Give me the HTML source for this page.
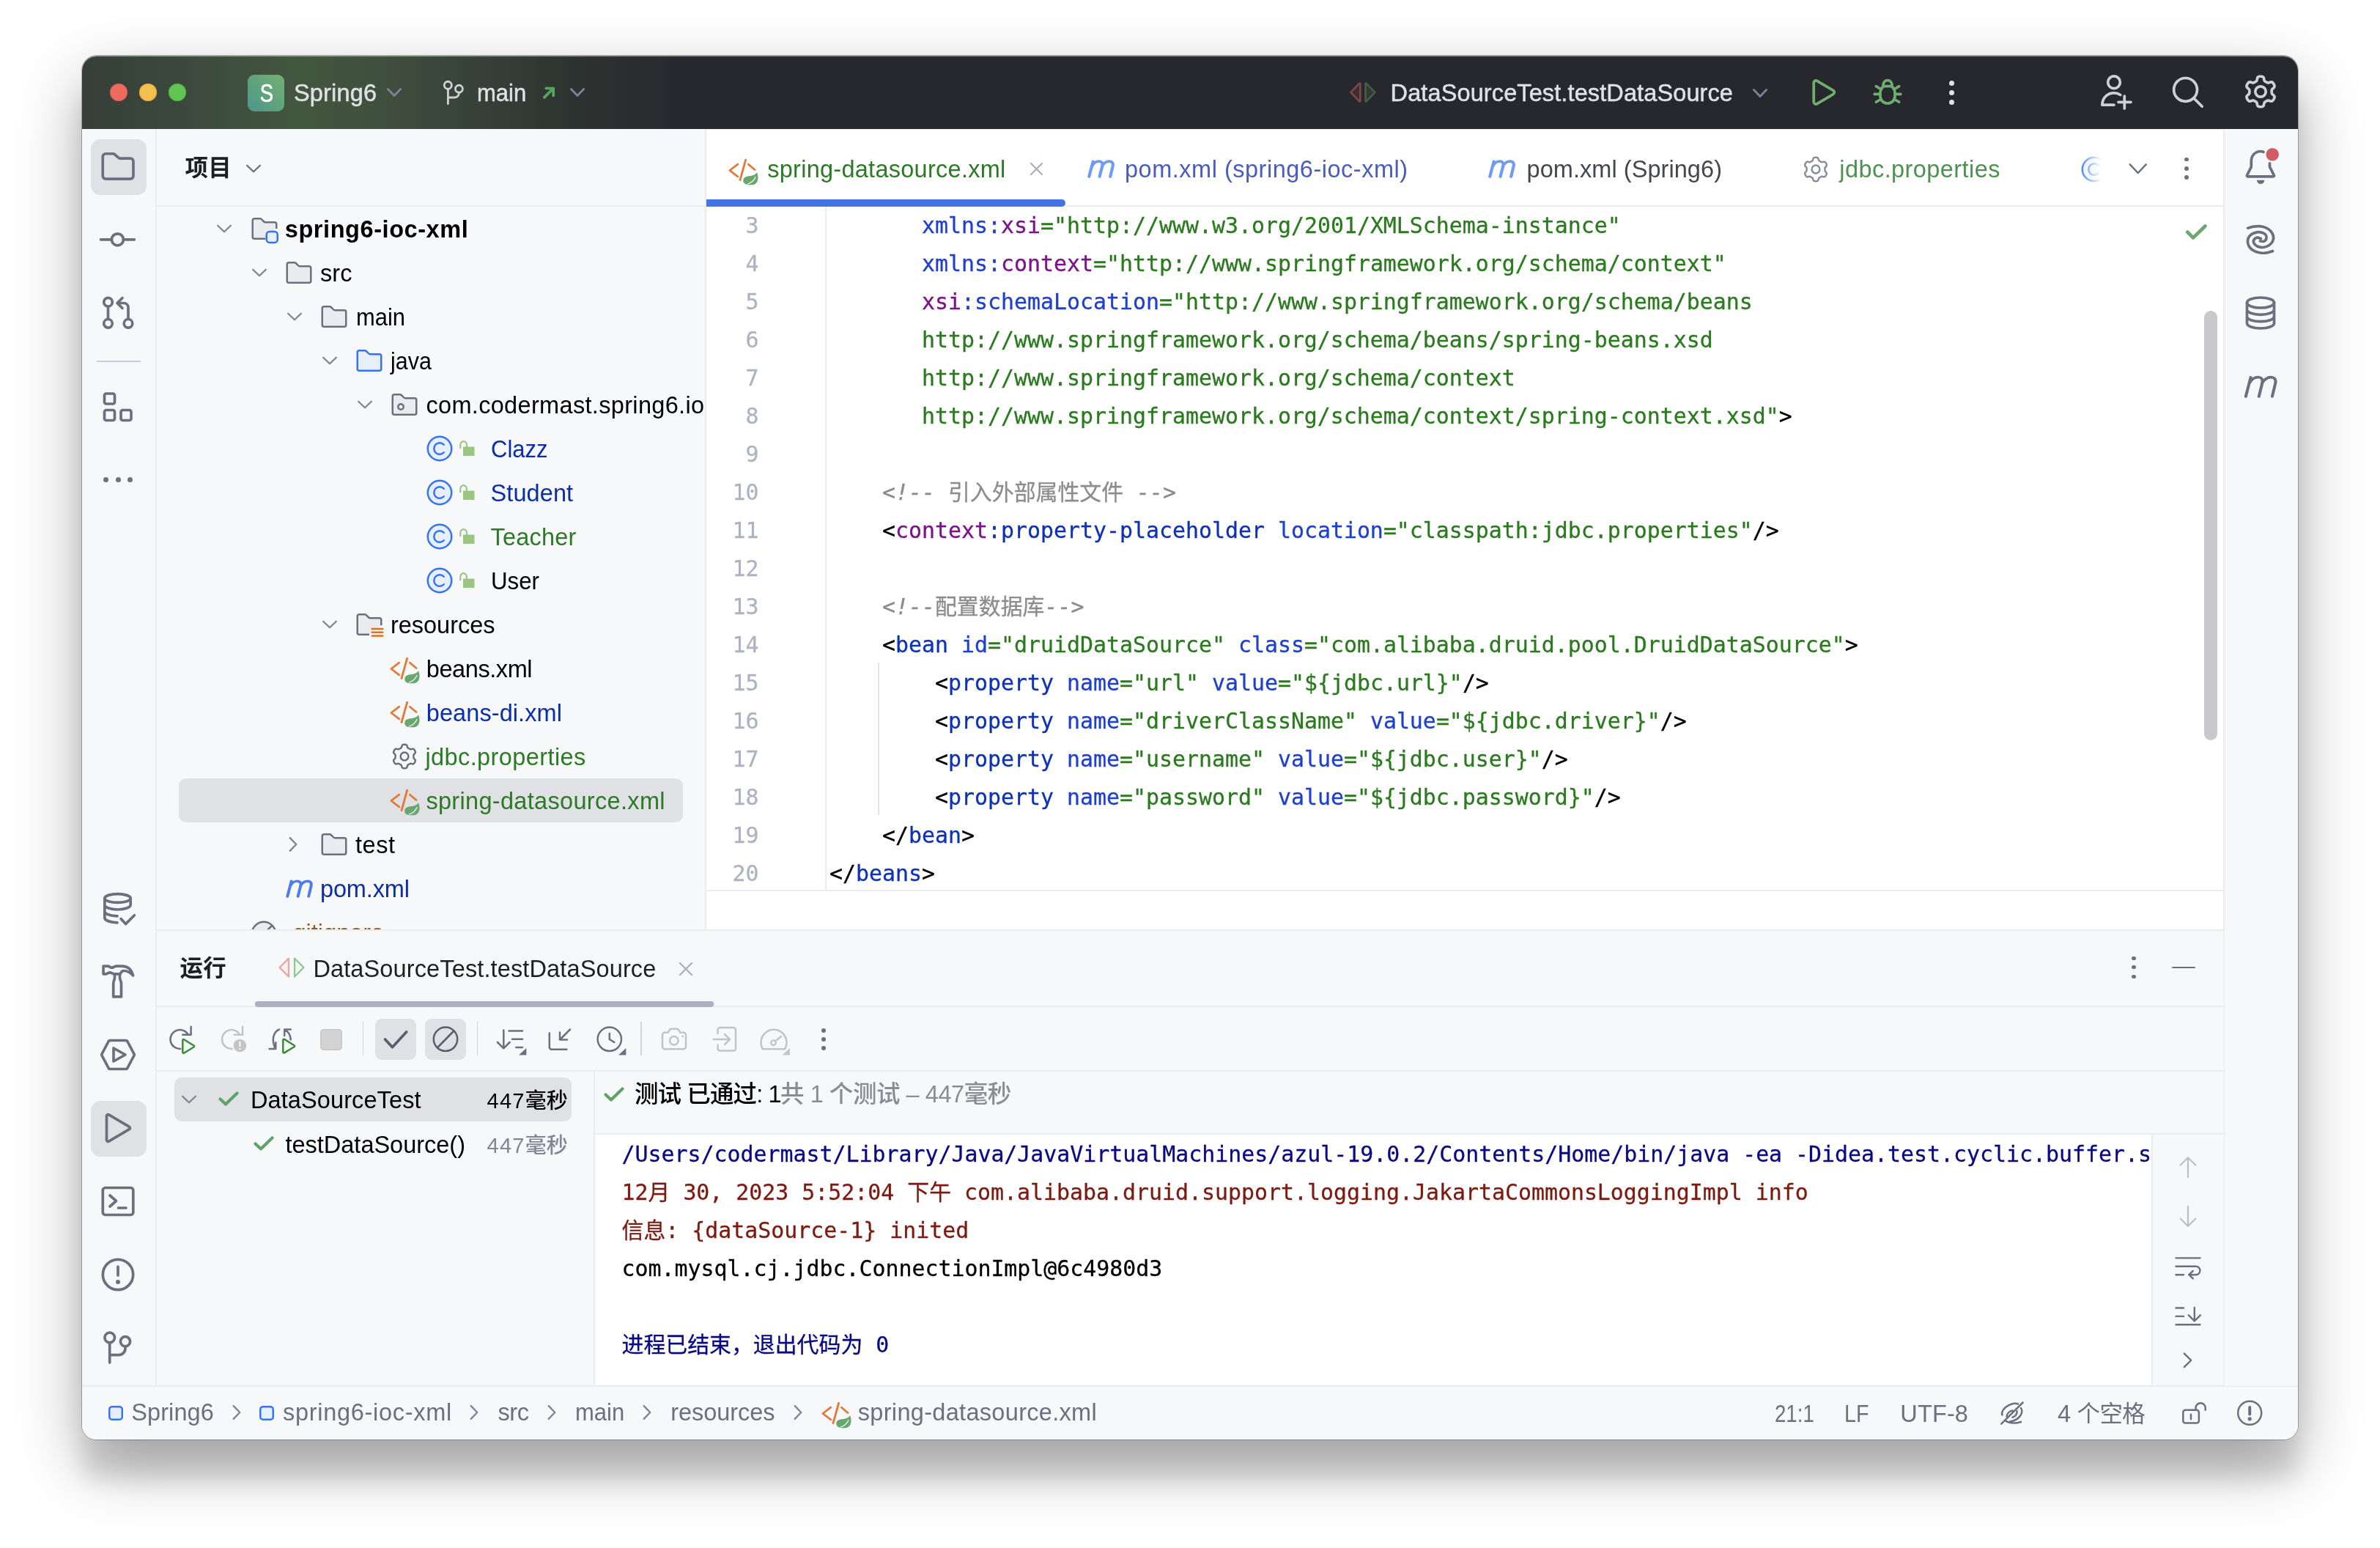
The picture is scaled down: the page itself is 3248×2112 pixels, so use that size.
<!DOCTYPE html>
<html lang="zh-CN"><head><meta charset="utf-8"><title>Spring6 – spring-datasource.xml</title>
<style>

*{box-sizing:border-box;margin:0;padding:0}
html,body{width:3248px;height:2112px;overflow:hidden;background:#fff}
body{position:relative;font-family:"Liberation Sans","Noto Sans CJK SC",sans-serif;font-size:32.5px;font-weight:500;color:#000;-webkit-font-smoothing:antialiased}
#shadow{position:absolute;left:112px;top:76px;width:3024px;height:1888px;border-radius:20px;
 box-shadow:0 0 0 1px rgba(0,0,0,.26),0 34px 90px rgba(0,0,0,.315),0 54px 30px rgba(0,0,0,.115)}
#win{position:absolute;left:112px;top:76px;width:3024px;height:1888px;border-radius:20px;overflow:hidden;background:#F7F8FA}
#rim{position:absolute;left:112px;top:76px;width:3024px;height:1888px;border-radius:20px;box-shadow:inset 0 1.2px 0 0 rgba(255,255,255,.38);pointer-events:none}
#in{position:absolute;left:-112px;top:-76px;width:3248px;height:2112px;will-change:transform}
.a{position:absolute}
.t{position:absolute;white-space:pre;line-height:40px;height:40px}
.mono{font-family:"DejaVu Sans Mono","Liberation Mono","Noto Sans CJK SC",monospace;font-size:29.9px;font-weight:400;-webkit-text-stroke:.3px}
.mono i{font-style:italic}
svg{position:absolute;overflow:visible}
.hl{position:absolute;height:2px;background:#EBECF0}
.vl{position:absolute;width:2px;background:#EBECF0}

</style></head>
<body>
<div id="shadow"></div>
<div id="win"><div id="in">
<!-- title bar -->
<div class="a" style="left:112px;top:76px;width:3024px;height:100px;background:#27282E"></div>
<div class="a" style="left:112px;top:76px;width:820px;height:100px;background:linear-gradient(90deg,#353F38 0%,#39463B 12%,#43563F 36%,#3F4F3D 50%,#353F38 68%,#2C312F 84%,#27282E 100%)"></div>
<div class="a" style="left:150px;top:114px;width:24px;height:24px;border-radius:12px;background:#EC6A5E;box-shadow:inset 0 0 0 1px #D5594D"></div>
<div class="a" style="left:190px;top:114px;width:24px;height:24px;border-radius:12px;background:#F4BF4F;box-shadow:inset 0 0 0 1px #D9A63B"></div>
<div class="a" style="left:230px;top:114px;width:24px;height:24px;border-radius:12px;background:#61C554;box-shadow:inset 0 0 0 1px #4FAE42"></div>
<div class="a" style="left:338px;top:102px;width:50px;height:50px;border-radius:9px;background:linear-gradient(45deg,#4C958D 0%,#61A37E 50%,#72B072 100%)"></div>
<div class="t" style="left:338.5px;top:106.6px;width:50px;text-align:center;font-size:34.3px;color:#fff;-webkit-text-stroke:.7px #fff;transform:scaleX(.80);transform-origin:50% 50%">S</div>
<div class="t" style="left:401.0px;top:106.5px;color:#DFE1E5;letter-spacing:0.17px;-webkit-text-stroke:.5px #DFE1E5;">Spring6</div>
<svg class="a" style="left:0;top:0" width="10" height="10" viewBox="0 0 10 10" fill="none"><path d="M529.4 121.55L538 130.45L546.6 121.55" stroke="#7D8296" stroke-width="2.8" stroke-linecap="round" stroke-linejoin="round"/></svg>
<svg class="a" style="left:0;top:0" width="10" height="10" viewBox="0 0 10 10" fill="none"><circle cx="611.3" cy="116.3" r="5.05" stroke="#CED0D6" stroke-width="2.8" stroke-linecap="round" stroke-linejoin="round"/><circle cx="626.4" cy="121.2" r="4.95" stroke="#CED0D6" stroke-width="2.8" stroke-linecap="round" stroke-linejoin="round"/><path d="M611.4 121.5V141.7M611.4 133h9a6 6 0 0 0 6-6v-0.7" stroke="#CED0D6" stroke-width="2.8" stroke-linecap="round" stroke-linejoin="round"/></svg>
<div class="t" style="left:651.4px;top:106.5px;color:#DFE1E5;transform:scaleX(0.954);transform-origin:0 50%;-webkit-text-stroke:.5px #DFE1E5;">main</div>
<svg class="a" style="left:0;top:0" width="10" height="10" viewBox="0 0 10 10" fill="none"><path d="M742.8 132.9L755.2 120.5M745.3 120.5h9.9v9.9" stroke="#57A55F" stroke-width="3.7" stroke-linecap="round" stroke-linejoin="round"/></svg>
<svg class="a" style="left:0;top:0" width="10" height="10" viewBox="0 0 10 10" fill="none"><path d="M779.4 121.55L788 130.45L796.6 121.55" stroke="#7D8296" stroke-width="2.8" stroke-linecap="round" stroke-linejoin="round"/></svg>
<svg class="a" style="left:0;top:0" width="10" height="10" viewBox="0 0 10 10" fill="none"><path d="M1856.3 114.5V137.5a.8.8 0 0 1-1.3.6L1844 126.6a.8.8 0 0 1 0-1.2L1855 113.9a.8.8 0 0 1 1.3.6z" fill="#3C2D30" stroke="#7D4648" stroke-width="2.8" stroke-linejoin="round"/><path d="M1863.5 114.5V137.5a.8.8 0 0 0 1.3.6L1875.800 126.6a.8.8 0 0 0 0-1.2L1864.800 113.9a.8.8 0 0 0-1.3.6z" fill="#303A34" stroke="#445C46" stroke-width="2.8" stroke-linejoin="round"/></svg>
<div class="t" style="left:1897.6px;top:106.5px;color:#DFE1E5;letter-spacing:0.11px;-webkit-text-stroke:.5px #DFE1E5;">DataSourceTest.testDataSource</div>
<svg class="a" style="left:0;top:0" width="10" height="10" viewBox="0 0 10 10" fill="none"><path d="M2393.4 122.55L2402 131.45L2410.6 122.55" stroke="#7D8296" stroke-width="2.8" stroke-linecap="round" stroke-linejoin="round"/></svg>
<svg class="a" style="left:0;top:0" width="10" height="10" viewBox="0 0 10 10" fill="none"><path d="M2475.2 113V139a3 3 0 0 0 4.5 2.6L2501.8 128.6a3 3 0 0 0 0-5.2L2479.7 110.4a3 3 0 0 0-4.5 2.6z" stroke="#6FAE70" stroke-width="3.7" stroke-linecap="round" stroke-linejoin="round"/></svg>
<svg class="a" style="left:0;top:0" width="10" height="10" viewBox="0 0 10 10" fill="none"><path d="M2571 117.7h10c3 1.8 5 5.3 5 9.3v4a10 10 0 0 1-20 0v-4c0-4 2-7.5 5-9.3z" stroke="#6FAE70" stroke-width="3.7" stroke-linecap="round" stroke-linejoin="round"/><path d="M2570 117.5v-1.8a6 6 0 0 1 12 0v1.8" stroke="#6FAE70" stroke-width="3.7" stroke-linecap="round" stroke-linejoin="round"/><path d="M2565.8 121l-5.5-3.3M2586.2 121l5.5-3.3M2565.5 128.4h-7.3M2586.5 128.4h7.3M2566 136l-5.7 3.2M2586 136l5.7 3.2" stroke="#6FAE70" stroke-width="3.7" stroke-linecap="round" stroke-linejoin="round"/></svg>
<div class="a" style="left:2660.3px;top:109.5px;width:7px;height:7px;border-radius:4px;background:#DFE1E5"></div>
<div class="a" style="left:2660.3px;top:122.5px;width:7px;height:7px;border-radius:4px;background:#DFE1E5"></div>
<div class="a" style="left:2660.3px;top:136px;width:7px;height:7px;border-radius:4px;background:#DFE1E5"></div>
<svg class="a" style="left:0;top:0" width="10" height="10" viewBox="0 0 10 10" fill="none"><circle cx="2885" cy="112.3" r="8.35" stroke="#CED0D6" stroke-width="3.7" stroke-linecap="round" stroke-linejoin="round"/><path d="M2884.9 143.2H2868.9c0-9.5 6.8-16.4 16.3-16.4 3.100 0 6 .8 8.5 2.6" stroke="#CED0D6" stroke-width="3.7" stroke-linecap="round" stroke-linejoin="round"/><path d="M2899.3 131v17M2891 139.3h17" stroke="#CED0D6" stroke-width="3.7" stroke-linecap="round" stroke-linejoin="round"/></svg>
<svg class="a" style="left:0;top:0" width="10" height="10" viewBox="0 0 10 10" fill="none"><circle cx="2982.55" cy="122.4" r="15.9" stroke="#CED0D6" stroke-width="3.7" stroke-linecap="round" stroke-linejoin="round"/><path d="M2994.2 134.2l11 11" stroke="#CED0D6" stroke-width="3.7" stroke-linecap="round" stroke-linejoin="round"/></svg>
<svg class="a" style="left:3060.0px;top:100.3px" width="50" height="50" viewBox="0 0 50 50" fill="none" ><path d="M25.00 4.25L25.72 4.27L26.45 4.33L27.16 4.45L27.86 4.67L28.52 5.06L29.09 5.77L29.50 6.94L29.78 8.34L30.03 9.50L30.37 10.25L30.77 10.71L31.22 11.03L31.68 11.31L32.14 11.57L32.60 11.84L33.06 12.10L33.52 12.37L33.99 12.63L34.49 12.85L35.09 12.97L35.90 12.89L37.04 12.53L38.39 12.07L39.61 11.85L40.51 11.98L41.18 12.36L41.72 12.86L42.18 13.41L42.59 14.01L42.97 14.62L43.32 15.26L43.62 15.92L43.88 16.60L44.04 17.31L44.03 18.07L43.69 18.93L42.90 19.87L41.82 20.81L40.94 21.61L40.46 22.27L40.27 22.85L40.20 23.40L40.19 23.94L40.20 24.47L40.20 25.00L40.20 25.53L40.19 26.06L40.20 26.60L40.27 27.15L40.46 27.73L40.94 28.39L41.82 29.19L42.90 30.13L43.69 31.07L44.03 31.93L44.04 32.69L43.88 33.40L43.62 34.08L43.32 34.74L42.97 35.37L42.59 35.99L42.18 36.59L41.72 37.14L41.18 37.64L40.51 38.02L39.61 38.15L38.39 37.93L37.04 37.47L35.90 37.11L35.09 37.03L34.49 37.15L33.99 37.37L33.52 37.63L33.06 37.90L32.60 38.16L32.14 38.43L31.68 38.69L31.22 38.97L30.77 39.29L30.37 39.75L30.03 40.50L29.78 41.66L29.50 43.06L29.09 44.23L28.52 44.94L27.86 45.33L27.16 45.55L26.45 45.67L25.72 45.73L25.00 45.75L24.28 45.73L23.55 45.67L22.84 45.55L22.14 45.33L21.48 44.94L20.91 44.23L20.50 43.06L20.22 41.66L19.97 40.50L19.63 39.75L19.23 39.29L18.78 38.97L18.32 38.69L17.86 38.43L17.40 38.16L16.94 37.90L16.48 37.63L16.01 37.37L15.51 37.15L14.91 37.03L14.10 37.11L12.96 37.47L11.61 37.93L10.39 38.15L9.49 38.02L8.82 37.64L8.28 37.14L7.82 36.59L7.41 35.99L7.03 35.38L6.68 34.74L6.38 34.08L6.12 33.40L5.96 32.69L5.97 31.93L6.31 31.07L7.10 30.13L8.18 29.19L9.06 28.39L9.54 27.73L9.73 27.15L9.80 26.60L9.81 26.06L9.80 25.53L9.80 25.00L9.80 24.47L9.81 23.94L9.80 23.40L9.73 22.85L9.54 22.27L9.06 21.61L8.18 20.81L7.10 19.87L6.31 18.93L5.97 18.07L5.96 17.31L6.12 16.60L6.38 15.92L6.68 15.26L7.03 14.62L7.41 14.01L7.82 13.41L8.28 12.86L8.82 12.36L9.49 11.98L10.39 11.85L11.61 12.07L12.96 12.53L14.10 12.89L14.91 12.97L15.51 12.85L16.01 12.63L16.48 12.37L16.94 12.10L17.40 11.84L17.86 11.57L18.32 11.31L18.78 11.03L19.23 10.71L19.63 10.25L19.97 9.50L20.22 8.34L20.50 6.94L20.91 5.77L21.48 5.06L22.14 4.67L22.84 4.45L23.55 4.33L24.28 4.27L25.00 4.25Z" stroke="#CED0D6" stroke-width="3.7" stroke-linejoin="round"/><circle cx="25" cy="25" r="7.2" stroke="#CED0D6" stroke-width="3.7"/></svg>
<!-- left stripe -->
<div class="a" style="left:112px;top:176px;width:101px;height:1715px;background:#F7F8FA;"></div>
<div class="vl" style="left:212px;top:176px;height:1715px"></div>
<div class="a" style="left:124px;top:190px;width:76px;height:76px;background:#DFE1E5;border-radius:13px;"></div>
<svg class="a" style="left:136.0px;top:202.0px" width="50" height="50" viewBox="0 0 50 50" fill="none" ><path d="M4.25 11.75V38.05a4 4 0 0 0 4 4H41.95a4 4 0 0 0 4-4V18.2a4 4 0 0 0-4-4H27.6a2 2 0 0 1-1.3-.5L20 8.25a2 2 0 0 0-1.3-.5H8.25a4 4 0 0 0-4 4z" stroke="#6C707E" stroke-width="3.7" stroke-linecap="round" stroke-linejoin="round"/></svg>
<svg class="a" style="left:136.0px;top:302.0px" width="50" height="50" viewBox="0 0 50 50" fill="none" ><circle cx="24.4" cy="24.8" r="8" stroke="#6C707E" stroke-width="3.7"/><path d="M1.5 24.8h14.5M32.8 24.8h14.5" stroke="#6C707E" stroke-width="3.7" stroke-linecap="round" stroke-linejoin="round"/></svg>
<svg class="a" style="left:136.0px;top:402.0px" width="50" height="50" viewBox="0 0 50 50" fill="none" ><circle cx="11.5" cy="10.2" r="5.8" stroke="#6C707E" stroke-width="3.7"/><circle cx="11.5" cy="39.3" r="5.8" stroke="#6C707E" stroke-width="3.7"/><circle cx="39" cy="39.3" r="5.8" stroke="#6C707E" stroke-width="3.7"/><path d="M11.5 16.5v16.5M39 33V17.5a6 6 0 0 0-6-6h-7M31 4.5l-7 7 7 7" stroke="#6C707E" stroke-width="3.7" stroke-linecap="round" stroke-linejoin="round"/></svg>
<div class="a" style="left:132px;top:492px;width:60px;height:2px;background:#C9CCD6;"></div>
<svg class="a" style="left:136.0px;top:530.0px" width="50" height="50" viewBox="0 0 50 50" fill="none" ><rect x="6.5" y="7" width="14" height="14" rx="2.5" stroke="#6C707E" stroke-width="3.7"/><rect x="6.5" y="29.5" width="14" height="14" rx="2.5" stroke="#6C707E" stroke-width="3.7"/><rect x="29" y="29.5" width="14" height="14" rx="2.5" stroke="#6C707E" stroke-width="3.7"/></svg>
<div class="a" style="left:141px;top:651px;width:7px;height:7px;border-radius:4px;background:#6C707E"></div>
<div class="a" style="left:157.5px;top:651px;width:7px;height:7px;border-radius:4px;background:#6C707E"></div>
<div class="a" style="left:174px;top:651px;width:7px;height:7px;border-radius:4px;background:#6C707E"></div>
<svg class="a" style="left:0;top:0" width="10" height="10" viewBox="0 0 10 10" fill="none"><ellipse cx="160.5" cy="1225.55" rx="17.65" ry="5.9" stroke="#6C707E" stroke-width="3.7"/><path d="M142.85 1225.5V1252.2c0 3.3 7 6 17.2 6.6M178.15 1225.5V1234.6M142.85 1234.6c0 3.5 7.9 6.4 17.650 6.4s17.650-2.9 17.650-6.4M142.85 1243.4c0 3.3 7 6 17.2 6.5" stroke="#6C707E" stroke-width="3.7" stroke-linecap="round" stroke-linejoin="round"/><path d="M165 1253.6l6.5 7 11.9-11.9" stroke="#6C707E" stroke-width="3.7" stroke-linecap="round" stroke-linejoin="round"/></svg>
<svg class="a" style="left:0;top:0" width="10" height="10" viewBox="0 0 10 10" fill="none"><path d="M141.05 1318.2H147.2c1.5 0 2 .5 3 1.2 1.5 1 3.5 1 5 0 1-.7 1.8-1.2 3.3-1.2H166.5c8 0 13 5 15.1 12.8-4-4.5-8.5-6.5-12.5-6.5-2.5 0-4 2-5 4.3H155.8c-1.5 0-2.3-.5-3.3-1.2-1.5-1-3.5-1-5 0-1 .7-1.5 1.2-3 1.2H141.05z" stroke="#6C707E" stroke-width="3.7" stroke-linecap="round" stroke-linejoin="round"/><path d="M156.5 1329.5V1334c0 3-1.8 4-1.8 8V1359.9H165.5V1342c0-4-2-5-2-8V1329.5" stroke="#6C707E" stroke-width="3.7" stroke-linecap="round" stroke-linejoin="round"/></svg>
<svg class="a" style="left:136.0px;top:1414.0px" width="50" height="50" viewBox="0 0 50 50" fill="none" ><path d="M14 5.5h22a2 2 0 0 1 1.7 1l9.3 17.5a2 2 0 0 1 0 2L37.7 43.5a2 2 0 0 1-1.7 1H14a2 2 0 0 1-1.7-1L3 26a2 2 0 0 1 0-2L12.3 6.5a2 2 0 0 1 1.7-1z" stroke="#6C707E" stroke-width="3.7" stroke-linecap="round" stroke-linejoin="round"/><path d="M19 16v18l16-9z" stroke="#6C707E" stroke-width="3.7" stroke-linecap="round" stroke-linejoin="round"/></svg>
<div class="a" style="left:124px;top:1502px;width:76px;height:76px;background:#DFE1E5;border-radius:13px;"></div>
<svg class="a" style="left:136.0px;top:1514.0px" width="50" height="50" viewBox="0 0 50 50" fill="none" ><path d="M9.5 8.5v33a2 2 0 0 0 3 1.7l28-16.5a2 2 0 0 0 0-3.4l-28-16.5a2 2 0 0 0-3 1.7z" stroke="#6C707E" stroke-width="3.7" stroke-linecap="round" stroke-linejoin="round"/></svg>
<svg class="a" style="left:136.0px;top:1614.0px" width="50" height="50" viewBox="0 0 50 50" fill="none" ><rect x="4.3" y="6.5" width="41.5" height="37" rx="3.5" stroke="#6C707E" stroke-width="3.7"/><path d="M14 17l8.5 7.5L14 32M25.5 34h10.5" stroke="#6C707E" stroke-width="3.7" stroke-linecap="round" stroke-linejoin="round"/></svg>
<svg class="a" style="left:136.0px;top:1714.0px" width="50" height="50" viewBox="0 0 50 50" fill="none" ><circle cx="25" cy="25" r="20.7" stroke="#6C707E" stroke-width="3.7"/><path d="M25 14v12" stroke="#6C707E" stroke-width="3.7" stroke-linecap="round" stroke-linejoin="round"/><circle cx="25" cy="35" r="3" fill="#6C707E"/></svg>
<svg class="a" style="left:136.0px;top:1813.0px" width="50" height="50" viewBox="0 0 50 50" fill="none" ><circle cx="13.7" cy="12" r="6.8" stroke="#6C707E" stroke-width="3.7"/><circle cx="35" cy="17.3" r="6.6" stroke="#6C707E" stroke-width="3.7"/><path d="M13.7 19v27M13.7 35.7h12.3a9 9 0 0 0 9-9v-2.5" stroke="#6C707E" stroke-width="3.7" stroke-linecap="round" stroke-linejoin="round"/></svg>
<!-- project tool window -->
<div class="a" style="left:214px;top:176px;width:749px;height:1092px;background:#F7F8FA;overflow:hidden"><div class="a" style="left:-214px;top:-176px;width:3248px;height:2112px">
<div class="t" style="left:252.5px;top:209px;font-weight:bold;color:#1E1F22;font-size:31.5px;letter-spacing:.3px">项目</div>
<svg class="a" style="left:326.0px;top:210.0px" width="40" height="40" viewBox="0 0 16 16" fill="none" ><path d="M4.45 6.3l3.55 3.4 3.55-3.4" stroke="#6C707E" stroke-width="0.95" stroke-linecap="round" stroke-linejoin="round"/></svg>
<div class="hl" style="left:214px;top:280px;width:749px"></div>
<svg class="a" style="left:286.0px;top:292.0px" width="40" height="40" viewBox="0 0 16 16" fill="none" ><path d="M4.45 6.3l3.55 3.4 3.55-3.4" stroke="#818594" stroke-width="0.95" stroke-linecap="round" stroke-linejoin="round"/></svg>
<svg class="a" style="left:341.0px;top:292.0px" width="40" height="40" viewBox="0 0 16 16" fill="none" ><path d="M8.5 13.5H2.5a1 1 0 0 1-1-1V3.5a1 1 0 0 1 1-1h3.1a1 1 0 0 1 .7.3l1.4 1.4a1 1 0 0 0 .7.3h5.1a1 1 0 0 1 1 1V8" fill="#EBECF0" stroke="#6C707E"/><rect x="9.1" y="9.55" width="6" height="6" rx="1.6" fill="#E7EFFD" stroke="#3574F0"/></svg>
<div class="t" style="left:388.8px;top:292.5px;color:#000;font-weight:bold;letter-spacing:0.57px;">spring6-ioc-xml</div>
<svg class="a" style="left:334.0px;top:352.0px" width="40" height="40" viewBox="0 0 16 16" fill="none" ><path d="M4.45 6.3l3.55 3.4 3.55-3.4" stroke="#818594" stroke-width="0.95" stroke-linecap="round" stroke-linejoin="round"/></svg>
<svg class="a" style="left:388.0px;top:352.0px" width="40" height="40" viewBox="0 0 16 16" fill="none" ><path d="M1.5 4v8.5a1 1 0 0 0 1 1h11a1 1 0 0 0 1-1v-7a1 1 0 0 0-1-1H8.4a1 1 0 0 1-.7-.3L6.3 2.8a1 1 0 0 0-.7-.3H2.5a1 1 0 0 0-1 1z" fill="#EBECF0" stroke="#6C707E" stroke-width="1"/></svg>
<div class="t" style="left:437.0px;top:352.5px;color:#000;letter-spacing:0.11px;">src</div>
<svg class="a" style="left:381.5px;top:412.0px" width="40" height="40" viewBox="0 0 16 16" fill="none" ><path d="M4.45 6.3l3.55 3.4 3.55-3.4" stroke="#818594" stroke-width="0.95" stroke-linecap="round" stroke-linejoin="round"/></svg>
<svg class="a" style="left:436.0px;top:412.0px" width="40" height="40" viewBox="0 0 16 16" fill="none" ><path d="M1.5 4v8.5a1 1 0 0 0 1 1h11a1 1 0 0 0 1-1v-7a1 1 0 0 0-1-1H8.4a1 1 0 0 1-.7-.3L6.3 2.8a1 1 0 0 0-.7-.3H2.5a1 1 0 0 0-1 1z" fill="#EBECF0" stroke="#6C707E" stroke-width="1"/></svg>
<div class="t" style="left:485.5px;top:412.5px;color:#000;transform:scaleX(0.950);transform-origin:0 50%;">main</div>
<svg class="a" style="left:430.0px;top:472.0px" width="40" height="40" viewBox="0 0 16 16" fill="none" ><path d="M4.45 6.3l3.55 3.4 3.55-3.4" stroke="#818594" stroke-width="0.95" stroke-linecap="round" stroke-linejoin="round"/></svg>
<svg class="a" style="left:484.0px;top:472.0px" width="40" height="40" viewBox="0 0 16 16" fill="none" ><path d="M1.5 4v8.5a1 1 0 0 0 1 1h11a1 1 0 0 0 1-1v-7a1 1 0 0 0-1-1H8.4a1 1 0 0 1-.7-.3L6.3 2.8a1 1 0 0 0-.7-.3H2.5a1 1 0 0 0-1 1z" fill="#E7EFFD" stroke="#3574F0" stroke-width="1"/></svg>
<div class="t" style="left:532.8px;top:472.5px;color:#000;transform:scaleX(0.937);transform-origin:0 50%;">java</div>
<svg class="a" style="left:478.0px;top:532.0px" width="40" height="40" viewBox="0 0 16 16" fill="none" ><path d="M4.45 6.3l3.55 3.4 3.55-3.4" stroke="#818594" stroke-width="0.95" stroke-linecap="round" stroke-linejoin="round"/></svg>
<svg class="a" style="left:532.0px;top:532.0px" width="40" height="40" viewBox="0 0 16 16" fill="none" ><path d="M1.5 4v8.5a1 1 0 0 0 1 1h11a1 1 0 0 0 1-1v-7a1 1 0 0 0-1-1H8.4a1 1 0 0 1-.7-.3L6.3 2.8a1 1 0 0 0-.7-.3H2.5a1 1 0 0 0-1 1z" fill="#EBECF0" stroke="#6C707E"/><circle cx="6" cy="9.2" r="1.5" stroke="#6C707E"/></svg>
<div class="t" style="left:581.4px;top:532.5px;color:#000;letter-spacing:0.33px;">com.codermast.spring6.io</div>
<svg class="a" style="left:580.0px;top:592.0px" width="40" height="40" viewBox="0 0 16 16" fill="none" ><circle cx="8" cy="8" r="6.5" fill="#E7EFFD" stroke="#3574F0"/><path d="M10.3 5.9A3.1 3.1 0 1 0 10.3 10.1" stroke="#3574F0" stroke-linecap="round"/></svg>
<svg class="a" style="left:626.5px;top:600.0px" width="24" height="24" viewBox="0 0 24 24" fill="none" ><rect x="5" y="9.5" width="15.5" height="12.5" fill="#99C781"/><path d="M1.3 12V6.5a4.3 4.3 0 0 1 8.6 0V10" stroke="#99C781" stroke-width="2.2"/></svg>
<div class="t" style="left:669.5px;top:592.5px;color:#0A2EA5;transform:scaleX(0.954);transform-origin:0 50%;">Clazz</div>
<svg class="a" style="left:580.0px;top:652.0px" width="40" height="40" viewBox="0 0 16 16" fill="none" ><circle cx="8" cy="8" r="6.5" fill="#E7EFFD" stroke="#3574F0"/><path d="M10.3 5.9A3.1 3.1 0 1 0 10.3 10.1" stroke="#3574F0" stroke-linecap="round"/></svg>
<svg class="a" style="left:626.5px;top:660.0px" width="24" height="24" viewBox="0 0 24 24" fill="none" ><rect x="5" y="9.5" width="15.5" height="12.5" fill="#99C781"/><path d="M1.3 12V6.5a4.3 4.3 0 0 1 8.6 0V10" stroke="#99C781" stroke-width="2.2"/></svg>
<div class="t" style="left:669.5px;top:652.5px;color:#0A2EA5;letter-spacing:0.09px;">Student</div>
<svg class="a" style="left:580.0px;top:712.0px" width="40" height="40" viewBox="0 0 16 16" fill="none" ><circle cx="8" cy="8" r="6.5" fill="#E7EFFD" stroke="#3574F0"/><path d="M10.3 5.9A3.1 3.1 0 1 0 10.3 10.1" stroke="#3574F0" stroke-linecap="round"/></svg>
<svg class="a" style="left:626.5px;top:720.0px" width="24" height="24" viewBox="0 0 24 24" fill="none" ><rect x="5" y="9.5" width="15.5" height="12.5" fill="#99C781"/><path d="M1.3 12V6.5a4.3 4.3 0 0 1 8.6 0V10" stroke="#99C781" stroke-width="2.2"/></svg>
<div class="t" style="left:669.5px;top:712.5px;color:#2D7A26;letter-spacing:0.22px;">Teacher</div>
<svg class="a" style="left:580.0px;top:772.0px" width="40" height="40" viewBox="0 0 16 16" fill="none" ><circle cx="8" cy="8" r="6.5" fill="#E7EFFD" stroke="#3574F0"/><path d="M10.3 5.9A3.1 3.1 0 1 0 10.3 10.1" stroke="#3574F0" stroke-linecap="round"/></svg>
<svg class="a" style="left:626.5px;top:780.0px" width="24" height="24" viewBox="0 0 24 24" fill="none" ><rect x="5" y="9.5" width="15.5" height="12.5" fill="#99C781"/><path d="M1.3 12V6.5a4.3 4.3 0 0 1 8.6 0V10" stroke="#99C781" stroke-width="2.2"/></svg>
<div class="t" style="left:669.5px;top:772.5px;color:#000;transform:scaleX(0.962);transform-origin:0 50%;">User</div>
<svg class="a" style="left:430.0px;top:832.0px" width="40" height="40" viewBox="0 0 16 16" fill="none" ><path d="M4.45 6.3l3.55 3.4 3.55-3.4" stroke="#818594" stroke-width="0.95" stroke-linecap="round" stroke-linejoin="round"/></svg>
<svg class="a" style="left:484.0px;top:832.0px" width="40" height="40" viewBox="0 0 16 16" fill="none" ><path d="M8 13.5H2.5a1 1 0 0 1-1-1V3.5a1 1 0 0 1 1-1h3.1a1 1 0 0 1 .7.3l1.4 1.4a1 1 0 0 0 .7.3h5.1a1 1 0 0 1 1 1V8.5" fill="#EBECF0" stroke="#6C707E"/><path d="M9.5 10.4h5.8M9.5 12.3h5.8M9.5 14.2h5.8" stroke="#E66D17" stroke-width="1.05" stroke-linecap="round"/></svg>
<div class="t" style="left:532.9px;top:832.5px;color:#000;">resources</div>
<svg class="a" style="left:532.0px;top:892.0px" width="40" height="40" viewBox="0 0 16 16" fill="none" ><path d="M5.1 4.85L.75 8.2l4.35 3.35M9.45 2.5L6.4 13.45M10.95 4.9l3.45 2.9" stroke="#E07A38" stroke-width="1.12" stroke-linecap="round" stroke-linejoin="round"/><path d="M15.6 9.25c.9 2.1.8 4.3-.2 5.6-1.1 1.5-3.2 1.3-5.1 1.1-1.5-.2-2.3-1.2-2.2-2.4.1-1.7 1.9-2.2 3.8-2.4 1.7-.2 2.9-.7 3.7-1.9z" fill="#6AA670"/><path d="M10.5 15.6c2-.6 3.5-1.9 4.3-3.8" stroke="#F7F8FA" stroke-width=".5" stroke-linecap="round"/></svg>
<div class="t" style="left:581.8px;top:892.5px;color:#000;letter-spacing:-0.42px;">beans.xml</div>
<svg class="a" style="left:532.0px;top:952.0px" width="40" height="40" viewBox="0 0 16 16" fill="none" ><path d="M5.1 4.85L.75 8.2l4.35 3.35M9.45 2.5L6.4 13.45M10.95 4.9l3.45 2.9" stroke="#E07A38" stroke-width="1.12" stroke-linecap="round" stroke-linejoin="round"/><path d="M15.6 9.25c.9 2.1.8 4.3-.2 5.6-1.1 1.5-3.2 1.3-5.1 1.1-1.5-.2-2.3-1.2-2.2-2.4.1-1.7 1.9-2.2 3.8-2.4 1.7-.2 2.9-.7 3.7-1.9z" fill="#6AA670"/><path d="M10.5 15.6c2-.6 3.5-1.9 4.3-3.8" stroke="#F7F8FA" stroke-width=".5" stroke-linecap="round"/></svg>
<div class="t" style="left:581.8px;top:952.5px;color:#0A2EA5;letter-spacing:0.08px;">beans-di.xml</div>
<svg class="a" style="left:532.0px;top:1012.0px" width="40" height="40" viewBox="0 0 40 40" fill="none" ><path d="M20.00 3.80L20.57 3.81L21.13 3.86L21.69 3.95L22.23 4.10L22.75 4.38L23.21 4.89L23.57 5.70L23.82 6.68L24.06 7.50L24.36 8.03L24.70 8.37L25.07 8.62L25.45 8.84L25.82 9.05L26.20 9.26L26.57 9.48L26.95 9.70L27.32 9.92L27.73 10.11L28.19 10.24L28.80 10.23L29.63 10.03L30.60 9.76L31.48 9.66L32.15 9.81L32.65 10.12L33.06 10.51L33.41 10.95L33.73 11.42L34.03 11.90L34.30 12.40L34.54 12.91L34.74 13.44L34.88 13.99L34.90 14.58L34.70 15.23L34.17 15.94L33.45 16.65L32.86 17.27L32.55 17.79L32.43 18.25L32.39 18.70L32.39 19.13L32.40 19.57L32.40 20.00L32.40 20.43L32.39 20.87L32.39 21.30L32.43 21.75L32.55 22.21L32.86 22.73L33.45 23.35L34.17 24.06L34.70 24.77L34.90 25.42L34.88 26.01L34.74 26.56L34.54 27.09L34.30 27.60L34.03 28.10L33.73 28.58L33.41 29.05L33.06 29.49L32.65 29.88L32.15 30.19L31.48 30.34L30.60 30.24L29.63 29.97L28.80 29.77L28.19 29.76L27.73 29.89L27.32 30.08L26.95 30.30L26.57 30.52L26.20 30.74L25.82 30.95L25.45 31.16L25.07 31.38L24.70 31.63L24.36 31.97L24.06 32.50L23.82 33.32L23.57 34.30L23.21 35.11L22.75 35.62L22.23 35.90L21.69 36.05L21.13 36.14L20.57 36.19L20.00 36.20L19.43 36.19L18.87 36.14L18.31 36.05L17.77 35.90L17.25 35.62L16.79 35.11L16.43 34.30L16.18 33.32L15.94 32.50L15.64 31.97L15.30 31.63L14.93 31.38L14.55 31.16L14.18 30.95L13.80 30.74L13.43 30.52L13.05 30.30L12.68 30.08L12.27 29.89L11.81 29.76L11.20 29.77L10.37 29.97L9.40 30.24L8.52 30.34L7.85 30.19L7.35 29.88L6.94 29.49L6.59 29.05L6.27 28.58L5.97 28.10L5.70 27.60L5.46 27.09L5.26 26.56L5.12 26.01L5.10 25.42L5.30 24.77L5.83 24.06L6.55 23.35L7.14 22.73L7.45 22.21L7.57 21.75L7.61 21.30L7.61 20.87L7.60 20.43L7.60 20.00L7.60 19.57L7.61 19.13L7.61 18.70L7.57 18.25L7.45 17.79L7.14 17.27L6.55 16.65L5.83 15.94L5.30 15.23L5.10 14.58L5.12 13.99L5.26 13.44L5.46 12.91L5.70 12.40L5.97 11.90L6.27 11.42L6.59 10.95L6.94 10.51L7.35 10.12L7.85 9.81L8.52 9.66L9.40 9.76L10.37 10.03L11.20 10.23L11.81 10.24L12.27 10.11L12.68 9.92L13.05 9.70L13.43 9.48L13.80 9.26L14.18 9.05L14.55 8.84L14.93 8.62L15.30 8.37L15.64 8.03L15.94 7.50L16.18 6.68L16.43 5.70L16.79 4.89L17.25 4.38L17.77 4.10L18.31 3.95L18.87 3.86L19.43 3.81L20.00 3.80Z" stroke="#6C707E" stroke-width="2.5" stroke-linejoin="round"/><circle cx="20" cy="20" r="5.4" stroke="#6C707E" stroke-width="2.5"/></svg>
<div class="t" style="left:580.4px;top:1012.5px;color:#2D7A26;letter-spacing:0.41px;">jdbc.properties</div>
<div class="a" style="left:244px;top:1062px;width:688px;height:60px;background:#DFE1E5;border-radius:10px;"></div>
<svg class="a" style="left:532.0px;top:1072.0px" width="40" height="40" viewBox="0 0 16 16" fill="none" ><path d="M5.1 4.85L.75 8.2l4.35 3.35M9.45 2.5L6.4 13.45M10.95 4.9l3.45 2.9" stroke="#E07A38" stroke-width="1.12" stroke-linecap="round" stroke-linejoin="round"/><path d="M15.6 9.25c.9 2.1.8 4.3-.2 5.6-1.1 1.5-3.2 1.3-5.1 1.1-1.5-.2-2.3-1.2-2.2-2.4.1-1.7 1.9-2.2 3.8-2.4 1.7-.2 2.9-.7 3.7-1.9z" fill="#6AA670"/><path d="M10.5 15.6c2-.6 3.5-1.9 4.3-3.8" stroke="#F7F8FA" stroke-width=".5" stroke-linecap="round"/></svg>
<div class="t" style="left:581.4px;top:1072.5px;color:#2D7A26;letter-spacing:0.32px;">spring-datasource.xml</div>
<svg class="a" style="left:380.0px;top:1132.0px" width="40" height="40" viewBox="0 0 16 16" fill="none" ><path d="M6.3 4.45l3.4 3.55-3.4 3.55" stroke="#818594" stroke-width="0.95" stroke-linecap="round" stroke-linejoin="round"/></svg>
<svg class="a" style="left:436.0px;top:1132.0px" width="40" height="40" viewBox="0 0 16 16" fill="none" ><path d="M1.5 4v8.5a1 1 0 0 0 1 1h11a1 1 0 0 0 1-1v-7a1 1 0 0 0-1-1H8.4a1 1 0 0 1-.7-.3L6.3 2.8a1 1 0 0 0-.7-.3H2.5a1 1 0 0 0-1 1z" fill="#EBECF0" stroke="#6C707E" stroke-width="1"/></svg>
<div class="t" style="left:485.0px;top:1132.5px;color:#000;letter-spacing:0.56px;">test</div>
<svg class="a" style="left:389.5px;top:1200.0px" width="37" height="25" viewBox="0 0 33 25" fill="none" preserveAspectRatio="none"><path d="M2 23L6.8 2.3M5.6 8.6C7.6 4.3 11.2 1.7 14.8 2.2c3.1.5 4 3 3.3 6.3L14.8 23M17.7 9C19.7 4.6 23.5 1.7 27.3 2.2c3.3.5 4.3 3.2 3.6 6.5L27.8 23" stroke="#4A7DEB" stroke-width="3.5" stroke-linecap="round" stroke-linejoin="round"/></svg>
<div class="t" style="left:437.0px;top:1192.5px;color:#0A2EA5;letter-spacing:-0.14px;">pom.xml</div>
<svg class="a" style="left:340.0px;top:1254.0px" width="40" height="40" viewBox="0 0 16 16" fill="none" ><circle cx="8" cy="8" r="6.5" fill="#EBECF0" stroke="#6C707E"/><path d="M3.5 12.5l9-9" stroke="#6C707E"/></svg>
<div class="t" style="left:390.5px;top:1252.5px;color:#8C5A1E;">.gitignore</div>
</div></div>
<div class="vl" style="left:962px;top:176px;height:1092px"></div>
<!-- editor -->
<div class="a" style="left:964px;top:176px;width:2071px;height:1092px;background:#fff;"></div>
<div class="hl" style="left:964px;top:176px;width:2071px;height:1px;background:#EDEEF2"></div>
<svg class="a" style="left:994.0px;top:211.5px" width="40" height="40" viewBox="0 0 16 16" fill="none" ><path d="M5.1 4.85L.75 8.2l4.35 3.35M9.45 2.5L6.4 13.45M10.95 4.9l3.45 2.9" stroke="#E07A38" stroke-width="1.12" stroke-linecap="round" stroke-linejoin="round"/><path d="M15.6 9.25c.9 2.1.8 4.3-.2 5.6-1.1 1.5-3.2 1.3-5.1 1.1-1.5-.2-2.3-1.2-2.2-2.4.1-1.7 1.9-2.2 3.8-2.4 1.7-.2 2.9-.7 3.7-1.9z" fill="#6AA670"/><path d="M10.5 15.6c2-.6 3.5-1.9 4.3-3.8" stroke="#fff" stroke-width=".5" stroke-linecap="round"/></svg>
<div class="t" style="left:1047.2px;top:210.9px;color:#2D7A26;letter-spacing:0.27px;">spring-datasource.xml</div>
<svg class="a" style="left:1405.5px;top:222.0px" width="17" height="17" viewBox="0 0 17 17" fill="none" ><path d="M1 1L16 16M16 1L1 16" stroke="#A8ADBD" stroke-width="2.2" stroke-linecap="round"/></svg>
<svg class="a" style="left:1484.0px;top:218.2px" width="37" height="25" viewBox="0 0 33 25" fill="none" preserveAspectRatio="none"><path d="M2 23L6.8 2.3M5.6 8.6C7.6 4.3 11.2 1.7 14.8 2.2c3.1.5 4 3 3.3 6.3L14.8 23M17.7 9C19.7 4.6 23.5 1.7 27.3 2.2c3.3.5 4.3 3.2 3.6 6.5L27.8 23" stroke="#6E9BF5" stroke-width="3.7" stroke-linecap="round" stroke-linejoin="round"/></svg>
<div class="t" style="left:1535.0px;top:210.9px;color:#4A5CBC;letter-spacing:0.51px;">pom.xml (spring6-ioc-xml)</div>
<svg class="a" style="left:2031.0px;top:218.2px" width="37" height="25" viewBox="0 0 33 25" fill="none" preserveAspectRatio="none"><path d="M2 23L6.8 2.3M5.6 8.6C7.6 4.3 11.2 1.7 14.8 2.2c3.1.5 4 3 3.3 6.3L14.8 23M17.7 9C19.7 4.6 23.5 1.7 27.3 2.2c3.3.5 4.3 3.2 3.6 6.5L27.8 23" stroke="#6E9BF5" stroke-width="3.7" stroke-linecap="round" stroke-linejoin="round"/></svg>
<div class="t" style="left:2083.5px;top:210.9px;color:#45474D;letter-spacing:0.06px;">pom.xml (Spring6)</div>
<svg class="a" style="left:2458.0px;top:210.5px" width="40" height="40" viewBox="0 0 40 40" fill="none" ><path d="M20.00 3.80L20.57 3.81L21.13 3.86L21.69 3.95L22.23 4.10L22.75 4.38L23.21 4.89L23.57 5.70L23.82 6.68L24.06 7.50L24.36 8.03L24.70 8.37L25.07 8.62L25.45 8.84L25.82 9.05L26.20 9.26L26.57 9.48L26.95 9.70L27.32 9.92L27.73 10.11L28.19 10.24L28.80 10.23L29.63 10.03L30.60 9.76L31.48 9.66L32.15 9.81L32.65 10.12L33.06 10.51L33.41 10.95L33.73 11.42L34.03 11.90L34.30 12.40L34.54 12.91L34.74 13.44L34.88 13.99L34.90 14.58L34.70 15.23L34.17 15.94L33.45 16.65L32.86 17.27L32.55 17.79L32.43 18.25L32.39 18.70L32.39 19.13L32.40 19.57L32.40 20.00L32.40 20.43L32.39 20.87L32.39 21.30L32.43 21.75L32.55 22.21L32.86 22.73L33.45 23.35L34.17 24.06L34.70 24.77L34.90 25.42L34.88 26.01L34.74 26.56L34.54 27.09L34.30 27.60L34.03 28.10L33.73 28.58L33.41 29.05L33.06 29.49L32.65 29.88L32.15 30.19L31.48 30.34L30.60 30.24L29.63 29.97L28.80 29.77L28.19 29.76L27.73 29.89L27.32 30.08L26.95 30.30L26.57 30.52L26.20 30.74L25.82 30.95L25.45 31.16L25.07 31.38L24.70 31.63L24.36 31.97L24.06 32.50L23.82 33.32L23.57 34.30L23.21 35.11L22.75 35.62L22.23 35.90L21.69 36.05L21.13 36.14L20.57 36.19L20.00 36.20L19.43 36.19L18.87 36.14L18.31 36.05L17.77 35.90L17.25 35.62L16.79 35.11L16.43 34.30L16.18 33.32L15.94 32.50L15.64 31.97L15.30 31.63L14.93 31.38L14.55 31.16L14.18 30.95L13.80 30.74L13.43 30.52L13.05 30.30L12.68 30.08L12.27 29.89L11.81 29.76L11.20 29.77L10.37 29.97L9.40 30.24L8.52 30.34L7.85 30.19L7.35 29.88L6.94 29.49L6.59 29.05L6.27 28.58L5.97 28.10L5.70 27.60L5.46 27.09L5.26 26.56L5.12 26.01L5.10 25.42L5.30 24.77L5.83 24.06L6.55 23.35L7.14 22.73L7.45 22.21L7.57 21.75L7.61 21.30L7.61 20.87L7.60 20.43L7.60 20.00L7.60 19.57L7.61 19.13L7.61 18.70L7.57 18.25L7.45 17.79L7.14 17.27L6.55 16.65L5.83 15.94L5.30 15.23L5.10 14.58L5.12 13.99L5.26 13.44L5.46 12.91L5.70 12.40L5.97 11.90L6.27 11.42L6.59 10.95L6.94 10.51L7.35 10.12L7.85 9.81L8.52 9.66L9.40 9.76L10.37 10.03L11.20 10.23L11.81 10.24L12.27 10.11L12.68 9.92L13.05 9.70L13.43 9.48L13.80 9.26L14.18 9.05L14.55 8.84L14.93 8.62L15.30 8.37L15.64 8.03L15.94 7.50L16.18 6.68L16.43 5.70L16.79 4.89L17.25 4.38L17.77 4.10L18.31 3.95L18.87 3.86L19.43 3.81L20.00 3.80Z" stroke="#8B8E99" stroke-width="2.5" stroke-linejoin="round"/><circle cx="20" cy="20" r="5.4" stroke="#8B8E99" stroke-width="2.5"/></svg>
<div class="t" style="left:2510.3px;top:210.9px;color:#4F9153;letter-spacing:0.43px;">jdbc.properties</div>
<div class="a" style="left:2836px;top:206px;width:34px;height:50px;overflow:hidden;-webkit-mask-image:linear-gradient(90deg,#000 10%,transparent 92%);mask-image:linear-gradient(90deg,#000 10%,transparent 92%)"><svg class="a" style="left:2.0px;top:5.0px" width="40" height="40" viewBox="0 0 16 16" fill="none" opacity="0.9"><circle cx="8" cy="8" r="6.5" fill="#E7EFFD" stroke="#3574F0"/><path d="M10.3 5.9A3.1 3.1 0 1 0 10.3 10.1" stroke="#3574F0" stroke-linecap="round"/></svg></div>
<svg class="a" style="left:0;top:0" width="10" height="10" viewBox="0 0 10 10" fill="none"><path d="M2906.7 224.3L2917.7 236L2928.7 224.3" stroke="#6C707E" stroke-width="2.5" stroke-linecap="round" stroke-linejoin="round"/></svg>
<div class="a" style="left:2981.2px;top:214.9px;width:5.6px;height:5.6px;border-radius:3px;background:#6C707E"></div>
<div class="a" style="left:2981.2px;top:227px;width:5.6px;height:5.6px;border-radius:3px;background:#6C707E"></div>
<div class="a" style="left:2981.2px;top:239.1px;width:5.6px;height:5.6px;border-radius:3px;background:#6C707E"></div>
<div class="hl" style="left:964px;top:280px;width:2071px"></div>
<div class="a" style="left:964px;top:272px;width:490px;height:10px;background:#4473E6;border-radius:0 5px 5px 0;"></div>
<div class="vl" style="left:1126px;top:282px;height:933px"></div>
<div class="hl" style="left:964px;top:1214px;width:2071px"></div>
<div class="a" style="left:1198px;top:904px;width:2px;height:208px;background:#E4E5EA;"></div>
<div class="t mono" style="left:933.5px;top:281.6px;width:102px;text-align:right;color:#AEB3C2;line-height:52px;height:52px">3</div>
<div class="t mono" style="left:1258px;top:281.6px;line-height:52px;height:52px"><span style="color:#1F40CC">xmlns:</span><span style="color:#7B1489">xsi</span><span style="color:#2A7A1E">=&quot;http://www.w3.org/2001/XMLSchema-instance&quot;</span></div>
<div class="t mono" style="left:933.5px;top:333.6px;width:102px;text-align:right;color:#AEB3C2;line-height:52px;height:52px">4</div>
<div class="t mono" style="left:1258px;top:333.6px;line-height:52px;height:52px"><span style="color:#1F40CC">xmlns:</span><span style="color:#7B1489">context</span><span style="color:#2A7A1E">=&quot;http://www.springframework.org/schema/context&quot;</span></div>
<div class="t mono" style="left:933.5px;top:385.6px;width:102px;text-align:right;color:#AEB3C2;line-height:52px;height:52px">5</div>
<div class="t mono" style="left:1258px;top:385.6px;line-height:52px;height:52px"><span style="color:#7B1489">xsi</span><span style="color:#1F40CC">:schemaLocation</span><span style="color:#2A7A1E">=&quot;http://www.springframework.org/schema/beans</span></div>
<div class="t mono" style="left:933.5px;top:437.6px;width:102px;text-align:right;color:#AEB3C2;line-height:52px;height:52px">6</div>
<div class="t mono" style="left:1258px;top:437.6px;line-height:52px;height:52px"><span style="color:#2A7A1E">http://www.springframework.org/schema/beans/spring-beans.xsd</span></div>
<div class="t mono" style="left:933.5px;top:489.6px;width:102px;text-align:right;color:#AEB3C2;line-height:52px;height:52px">7</div>
<div class="t mono" style="left:1258px;top:489.6px;line-height:52px;height:52px"><span style="color:#2A7A1E">http://www.springframework.org/schema/context</span></div>
<div class="t mono" style="left:933.5px;top:541.6px;width:102px;text-align:right;color:#AEB3C2;line-height:52px;height:52px">8</div>
<div class="t mono" style="left:1258px;top:541.6px;line-height:52px;height:52px"><span style="color:#2A7A1E">http://www.springframework.org/schema/context/spring-context.xsd&quot;</span><span style="color:#000">&gt;</span></div>
<div class="t mono" style="left:933.5px;top:593.6px;width:102px;text-align:right;color:#AEB3C2;line-height:52px;height:52px">9</div>
<div class="t mono" style="left:933.5px;top:645.6px;width:102px;text-align:right;color:#AEB3C2;line-height:52px;height:52px">10</div>
<div class="t mono" style="left:1204px;top:645.6px;line-height:52px;height:52px"><span style="color:#8C8C8C;font-style:italic">&lt;!-- </span><span style="color:#8C8C8C">引入外部属性文件</span><span style="color:#8C8C8C;font-style:italic"> --&gt;</span></div>
<div class="t mono" style="left:933.5px;top:697.6px;width:102px;text-align:right;color:#AEB3C2;line-height:52px;height:52px">11</div>
<div class="t mono" style="left:1204px;top:697.6px;line-height:52px;height:52px"><span style="color:#000">&lt;</span><span style="color:#7B1489">context</span><span style="color:#0F32B5">:property-placeholder</span><span style="color:#1F40CC"> location</span><span style="color:#2A7A1E">=&quot;classpath:jdbc.properties&quot;</span><span style="color:#000">/&gt;</span></div>
<div class="t mono" style="left:933.5px;top:749.6px;width:102px;text-align:right;color:#AEB3C2;line-height:52px;height:52px">12</div>
<div class="t mono" style="left:933.5px;top:801.6px;width:102px;text-align:right;color:#AEB3C2;line-height:52px;height:52px">13</div>
<div class="t mono" style="left:1204px;top:801.6px;line-height:52px;height:52px"><span style="color:#8C8C8C;font-style:italic">&lt;!--</span><span style="color:#8C8C8C">配置数据库</span><span style="color:#8C8C8C;font-style:italic">--&gt;</span></div>
<div class="t mono" style="left:933.5px;top:853.6px;width:102px;text-align:right;color:#AEB3C2;line-height:52px;height:52px">14</div>
<div class="t mono" style="left:1204px;top:853.6px;line-height:52px;height:52px"><span style="color:#000">&lt;</span><span style="color:#0F32B5">bean</span><span style="color:#1F40CC"> id</span><span style="color:#2A7A1E">=&quot;druidDataSource&quot;</span><span style="color:#1F40CC"> class</span><span style="color:#2A7A1E">=&quot;com.alibaba.druid.pool.DruidDataSource&quot;</span><span style="color:#000">&gt;</span></div>
<div class="t mono" style="left:933.5px;top:905.6px;width:102px;text-align:right;color:#AEB3C2;line-height:52px;height:52px">15</div>
<div class="t mono" style="left:1276px;top:905.6px;line-height:52px;height:52px"><span style="color:#000">&lt;</span><span style="color:#0F32B5">property</span><span style="color:#1F40CC"> name</span><span style="color:#2A7A1E">=&quot;url&quot;</span><span style="color:#1F40CC"> value</span><span style="color:#2A7A1E">=&quot;${jdbc.url}&quot;</span><span style="color:#000">/&gt;</span></div>
<div class="t mono" style="left:933.5px;top:957.6px;width:102px;text-align:right;color:#AEB3C2;line-height:52px;height:52px">16</div>
<div class="t mono" style="left:1276px;top:957.6px;line-height:52px;height:52px"><span style="color:#000">&lt;</span><span style="color:#0F32B5">property</span><span style="color:#1F40CC"> name</span><span style="color:#2A7A1E">=&quot;driverClassName&quot;</span><span style="color:#1F40CC"> value</span><span style="color:#2A7A1E">=&quot;${jdbc.driver}&quot;</span><span style="color:#000">/&gt;</span></div>
<div class="t mono" style="left:933.5px;top:1009.6px;width:102px;text-align:right;color:#AEB3C2;line-height:52px;height:52px">17</div>
<div class="t mono" style="left:1276px;top:1009.6px;line-height:52px;height:52px"><span style="color:#000">&lt;</span><span style="color:#0F32B5">property</span><span style="color:#1F40CC"> name</span><span style="color:#2A7A1E">=&quot;username&quot;</span><span style="color:#1F40CC"> value</span><span style="color:#2A7A1E">=&quot;${jdbc.user}&quot;</span><span style="color:#000">/&gt;</span></div>
<div class="t mono" style="left:933.5px;top:1061.6px;width:102px;text-align:right;color:#AEB3C2;line-height:52px;height:52px">18</div>
<div class="t mono" style="left:1276px;top:1061.6px;line-height:52px;height:52px"><span style="color:#000">&lt;</span><span style="color:#0F32B5">property</span><span style="color:#1F40CC"> name</span><span style="color:#2A7A1E">=&quot;password&quot;</span><span style="color:#1F40CC"> value</span><span style="color:#2A7A1E">=&quot;${jdbc.password}&quot;</span><span style="color:#000">/&gt;</span></div>
<div class="t mono" style="left:933.5px;top:1113.6px;width:102px;text-align:right;color:#AEB3C2;line-height:52px;height:52px">19</div>
<div class="t mono" style="left:1204px;top:1113.6px;line-height:52px;height:52px"><span style="color:#000">&lt;/</span><span style="color:#0F32B5">bean</span><span style="color:#000">&gt;</span></div>
<div class="t mono" style="left:933.5px;top:1165.6px;width:102px;text-align:right;color:#AEB3C2;line-height:52px;height:52px">20</div>
<div class="t mono" style="left:1132px;top:1165.6px;line-height:52px;height:52px"><span style="color:#000">&lt;/</span><span style="color:#0F32B5">beans</span><span style="color:#000">&gt;</span></div>
<svg class="a" style="left:0;top:0" width="10" height="10" viewBox="0 0 10 10" fill="none"><path d="M2985.3 316.6l7.7 7.8 16.4-15.9" stroke="#6CA670" stroke-width="4.8" stroke-linecap="round" stroke-linejoin="round"/></svg>
<div class="a" style="left:3008px;top:424px;width:18px;height:586px;background:#C9C9CB;border-radius:9px;"></div>
<div class="vl" style="left:3034px;top:176px;height:1715px"></div>
<!-- run tool window -->
<div class="a" style="left:214px;top:1268px;width:2821px;height:623px;background:#F7F8FA;"></div>
<div class="hl" style="left:214px;top:1268px;width:2821px"></div>
<div class="t" style="left:245.5px;top:1301px;font-weight:bold;color:#1E1F22;font-size:31.5px;letter-spacing:.3px">运行</div>
<svg class="a" style="left:378.0px;top:1304.0px" width="40" height="32" viewBox="0 0 40 32" fill="none" ><path d="M16 3.5L3.5 16 16 28.5z" fill="#FBEEEE" stroke="#E9A3A3" stroke-width="2.2" stroke-linejoin="round"/><path d="M24 3.5L36.5 16 24 28.5z" fill="#EFF8F0" stroke="#8FC698" stroke-width="2.2" stroke-linejoin="round"/></svg>
<div class="t" style="left:427.4px;top:1301.5px;color:#1E1F22;letter-spacing:0.13px;">DataSourceTest.testDataSource</div>
<svg class="a" style="left:927.0px;top:1312.5px" width="18" height="18" viewBox="0 0 18 18" fill="none" ><path d="M1 1L17 17M17 1L1 17" stroke="#A8ADBD" stroke-width="2.2" stroke-linecap="round"/></svg>
<div class="a" style="left:348px;top:1366px;width:626px;height:8px;background:#ACB0C1;border-radius:4px;"></div>
<div class="hl" style="left:214px;top:1372px;width:2821px"></div>
<div class="a" style="left:348px;top:1366px;width:626px;height:8px;background:#ACB0C1;border-radius:4px;"></div>
<div class="a" style="left:2909.4px;top:1304.8px;width:5.2px;height:5.2px;border-radius:3px;background:#6C707E"></div>
<div class="a" style="left:2909.4px;top:1317.3px;width:5.2px;height:5.2px;border-radius:3px;background:#6C707E"></div>
<div class="a" style="left:2909.4px;top:1330px;width:5.2px;height:5.2px;border-radius:3px;background:#6C707E"></div>
<div class="a" style="left:2964px;top:1318.6px;width:32.2px;height:2.6px;background:#6C707E;border-radius:1.3px;"></div>
<svg class="a" style="left:0px;top:0px" width="10" height="10" viewBox="0 0 10 10" fill="none"><path d="M249.3 1411.8h11.3v-11" stroke="#6C707E" stroke-width="2.5" stroke-linecap="round" stroke-linejoin="round"/><path d="M256.9 1411.8A13 13 0 1 0 246.2 1431" stroke="#6C707E" stroke-width="2.5" stroke-linecap="round" stroke-linejoin="round"/><path d="M249.3 1419.2v16.5a1.2 1.2 0 0 0 1.8 1l13.4-8.2a1.2 1.2 0 0 0 0-2l-13.4-8.3a1.2 1.2 0 0 0-1.8 1z" fill="#F2FCF3" stroke="#3D8A3D" stroke-width="2.5" stroke-linejoin="round"/></svg>
<svg class="a" style="left:0px;top:0px" width="10" height="10" viewBox="0 0 10 10" fill="none"><path d="M319.8 1411.8h11.3v-11" stroke="#C4C4C4" stroke-width="2.5" stroke-linecap="round" stroke-linejoin="round"/><path d="M327.4 1411.8A13 13 0 1 0 316.7 1431" stroke="#C4C4C4" stroke-width="2.5" stroke-linecap="round" stroke-linejoin="round"/><circle cx="327.4" cy="1426.5" r="8.8" fill="#C4C4C4"/><path d="M327.4 1421.5v5.5" stroke="#F7F8FA" stroke-width="2.2" stroke-linecap="round"/><circle cx="327.4" cy="1431" r="1.3" fill="#F7F8FA"/></svg>
<svg class="a" style="left:0px;top:0px" width="10" height="10" viewBox="0 0 10 10" fill="none"><path d="M381 1404.5c-8 3.5-11 14-5.2 26.5M367.5 1431h8.8v-8.8" stroke="#6C707E" stroke-width="2.5" stroke-linecap="round" stroke-linejoin="round"/><path d="M388.2 1404.5v8.5M388.2 1404.5h8.5M388.5 1405c5 2.5 8 7.5 8.2 13.5" stroke="#6C707E" stroke-width="2.5" stroke-linecap="round" stroke-linejoin="round"/><path d="M386.3 1418.9v16.5a1.2 1.2 0 0 0 1.8 1l13.4-8.2a1.2 1.2 0 0 0 0-2l-13.4-8.3a1.2 1.2 0 0 0-1.8 1z" fill="#F2FCF3" stroke="#3D8A3D" stroke-width="2.5" stroke-linejoin="round"/></svg>
<div class="a" style="left:437px;top:1403.5px;width:29.5px;height:29.5px;background:#D3D3D3;border-radius:5px;box-shadow:inset 0 0 0 1.5px #C6C6C6;"></div>
<div class="a" style="left:494.5px;top:1394px;width:1.5px;height:46px;background:#D3D5DB;"></div>
<div class="a" style="left:512px;top:1390px;width:56px;height:56px;background:#DFE1E5;border-radius:9px;"></div>
<svg class="a" style="left:0px;top:0px" width="10" height="10" viewBox="0 0 10 10" fill="none"><path d="M525.5 1418l10 10.8 19.3-21" stroke="#5A5D6B" stroke-width="3.6" stroke-linecap="round" stroke-linejoin="round"/></svg>
<div class="a" style="left:580px;top:1390px;width:56px;height:56px;background:#DFE1E5;border-radius:9px;"></div>
<svg class="a" style="left:0px;top:0px" width="10" height="10" viewBox="0 0 10 10" fill="none"><circle cx="608" cy="1417.8" r="16.2" stroke="#5A5D6B" stroke-width="2.5"/><path d="M596.8 1429.5l22.6-23" stroke="#5A5D6B" stroke-width="2.5"/></svg>
<div class="a" style="left:650.5px;top:1394px;width:1.5px;height:46px;background:#D3D5DB;"></div>
<svg class="a" style="left:0px;top:0px" width="10" height="10" viewBox="0 0 10 10" fill="none"><path d="M687.3 1405.5v24M679 1422l8.3 8.3 8.3-8.3M694.5 1406.6h18.5M699 1417.8h14M704.3 1429h8.7" stroke="#6C707E" stroke-width="2.5" stroke-linecap="round" stroke-linejoin="round"/><path d="M708 1439.5h10.3v-9.6z" fill="#6C707E"/></svg>
<svg class="a" style="left:0px;top:0px" width="10" height="10" viewBox="0 0 10 10" fill="none"><path d="M749.8 1409.5v19.3a3 3 0 0 0 3 3h20.5M778 1404.5l-14 14M764 1408.5v10h10" stroke="#6C707E" stroke-width="2.5" stroke-linecap="round" stroke-linejoin="round"/></svg>
<svg class="a" style="left:0px;top:0px" width="10" height="10" viewBox="0 0 10 10" fill="none"><circle cx="831.8" cy="1417.8" r="16.2" stroke="#6C707E" stroke-width="2.5"/><path d="M831.8 1410v8l6.5 4" stroke="#6C707E" stroke-width="2.5" stroke-linecap="round" stroke-linejoin="round"/><path d="M844 1439.5h10.3v-9.6z" fill="#6C707E"/></svg>
<div class="a" style="left:874.2px;top:1394px;width:1.5px;height:46px;background:#D3D5DB;"></div>
<svg class="a" style="left:0px;top:0px" width="10" height="10" viewBox="0 0 10 10" fill="none"><path d="M907 1408.8h4.5l2.5-4a2 2 0 0 1 1.7-1h8.5a2 2 0 0 1 1.7 1l2.5 4h4.6a3 3 0 0 1 3 3v16.5a3 3 0 0 1-3 3H907a3 3 0 0 1-3-3v-16.5a3 3 0 0 1 3-3z" stroke="#C4C4C4" stroke-width="2.5" stroke-linecap="round" stroke-linejoin="round"/><circle cx="919.8" cy="1419.8" r="5.8" stroke="#C4C4C4" stroke-width="2.5"/><circle cx="931.6" cy="1413.7" r="1.5" fill="#C4C4C4"/></svg>
<svg class="a" style="left:0px;top:0px" width="10" height="10" viewBox="0 0 10 10" fill="none"><path d="M979.5 1410v-5a3 3 0 0 1 3-3h18.5a3 3 0 0 1 3 3v25.6a3 3 0 0 1-3 3h-18.5a3 3 0 0 1-3-3v-5M973.5 1418h22.5M989 1411l7 7-7 7" stroke="#C4C4C4" stroke-width="2.5" stroke-linecap="round" stroke-linejoin="round"/></svg>
<svg class="a" style="left:0px;top:0px" width="10" height="10" viewBox="0 0 10 10" fill="none"><path d="M1041 1431.3a17.5 17.5 0 1 1 30 0z" stroke="#C4C4C4" stroke-width="2.5" stroke-linecap="round" stroke-linejoin="round"/><circle cx="1055.5" cy="1422.7" r="3.3" stroke="#C4C4C4" stroke-width="2.3"/><path d="M1058 1420.5l8-6.5" stroke="#C4C4C4" stroke-width="2.5" stroke-linecap="round" stroke-linejoin="round"/><path d="M1067.5 1439.5h10.3v-9.6z" fill="#C4C4C4"/></svg>
<div class="a" style="left:1120.8px;top:1402.5px;width:6px;height:6px;border-radius:3px;background:#6C707E"></div>
<div class="a" style="left:1120.8px;top:1414.8px;width:6px;height:6px;border-radius:3px;background:#6C707E"></div>
<div class="a" style="left:1120.8px;top:1427.3px;width:6px;height:6px;border-radius:3px;background:#6C707E"></div>
<div class="hl" style="left:214px;top:1460px;width:2821px"></div>
<div class="a" style="left:238px;top:1470px;width:542px;height:60px;background:#DFE1E5;border-radius:10px;"></div>
<svg class="a" style="left:238.0px;top:1480.0px" width="40" height="40" viewBox="0 0 16 16" fill="none" ><path d="M4.45 6.3l3.55 3.4 3.55-3.4" stroke="#818594" stroke-width="0.95" stroke-linecap="round" stroke-linejoin="round"/></svg>
<svg class="a" style="left:297.5px;top:1489.0px" width="28" height="20" viewBox="0 0 28 20" fill="none" ><path d="M2.5 10.5l7.5 7L25.5 2.5" stroke="#5FA466" stroke-width="4.2" stroke-linecap="round" stroke-linejoin="round"/></svg>
<div class="t" style="left:342.0px;top:1480.5px;color:#000;letter-spacing:0.10px;">DataSourceTest</div>
<div class="t" style="left:664.5px;top:1481.8px;font-size:29px"><span style="letter-spacing:1.3px">447</span>毫秒</div>
<svg class="a" style="left:345.5px;top:1550.0px" width="28" height="20" viewBox="0 0 28 20" fill="none" ><path d="M2.5 10.5l7.5 7L25.5 2.5" stroke="#5FA466" stroke-width="4.2" stroke-linecap="round" stroke-linejoin="round"/></svg>
<div class="t" style="left:389.5px;top:1541.5px;color:#000;letter-spacing:-0.01px;">testDataSource()</div>
<div class="t" style="left:664.5px;top:1542.8px;font-size:29px;color:#818594"><span style="letter-spacing:1.3px">447</span>毫秒</div>
<div class="vl" style="left:810px;top:1462px;height:429px"></div>
<svg class="a" style="left:823.5px;top:1483.0px" width="28" height="20" viewBox="0 0 28 20" fill="none" ><path d="M2.5 10.5l7.5 7L25.5 2.5" stroke="#5FA466" stroke-width="4.2" stroke-linecap="round" stroke-linejoin="round"/></svg>
<div class="t" style="left:866px;top:1473px;letter-spacing:-.9px">测试 已通过: 1</div>
<div class="t" style="left:1065px;top:1473px;color:#8A8C93;letter-spacing:-.45px">共 1 个测试 – 447毫秒</div>
<div class="hl" style="left:812px;top:1546px;width:2223px"></div>
<div class="a" style="left:812px;top:1548px;width:2124px;height:343px;background:#fff;"></div>
<div class="t mono" style="left:848.5px;top:1549.4px;line-height:52px;height:52px;color:#0A0A80">/Users/codermast/Library/Java/JavaVirtualMachines/azul-19.0.2/Contents/Home/bin/java -ea -Didea.test.cyclic.buffer.s</div>
<div class="t mono" style="left:848.5px;top:1601.4px;line-height:52px;height:52px;color:#7C1A10">12月 30, 2023 5:52:04 下午 com.alibaba.druid.support.logging.JakartaCommonsLoggingImpl info</div>
<div class="t mono" style="left:848.5px;top:1653.4px;line-height:52px;height:52px;color:#7C1A10">信息: {dataSource-1} inited</div>
<div class="t mono" style="left:848.5px;top:1705.4px;line-height:52px;height:52px;color:#000">com.mysql.cj.jdbc.ConnectionImpl@6c4980d3</div>
<div class="t mono" style="left:848.5px;top:1809.4px;line-height:52px;height:52px;color:#0A0A80">进程已结束，退出代码为 0</div>
<div class="vl" style="left:2936px;top:1548px;height:343px"></div>
<svg class="a" style="left:0px;top:0px" width="10" height="10" viewBox="0 0 10 10" fill="none"><path d="M2986 1606V1579.5M2975.8 1589.5l10.2-10.2 10.2 10.2" stroke="#C0C0C0" stroke-width="2.3" stroke-linecap="round" stroke-linejoin="round"/></svg>
<svg class="a" style="left:0px;top:0px" width="10" height="10" viewBox="0 0 10 10" fill="none"><path d="M2986 1646v26.5M2975.8 1662.7l10.2 10.2 10.2-10.2" stroke="#C0C0C0" stroke-width="2.3" stroke-linecap="round" stroke-linejoin="round"/></svg>
<svg class="a" style="left:0px;top:0px" width="10" height="10" viewBox="0 0 10 10" fill="none"><path d="M2969.5 1716.4h33M2969.5 1727.8h27.2a5.7 5.7 0 0 1 0 11.4h-9.5M2969.5 1739.2h10.5M2992.8 1734l-5.6 5.2 5.6 5.2" stroke="#6C707E" stroke-width="2.4" stroke-linecap="round" stroke-linejoin="round"/></svg>
<svg class="a" style="left:0px;top:0px" width="10" height="10" viewBox="0 0 10 10" fill="none"><path d="M2969.5 1784.5h10.5M2969.5 1795.9h10.5M2969.5 1807.3h33M2994.8 1784v17.5M2986.8 1794.3l8 8 8-8" stroke="#6C707E" stroke-width="2.4" stroke-linecap="round" stroke-linejoin="round"/></svg>
<svg class="a" style="left:0px;top:0px" width="10" height="10" viewBox="0 0 10 10" fill="none"><path d="M2980.8 1846.6l9.4 9.3-9.4 9.3" stroke="#6C707E" stroke-width="2.4" stroke-linecap="round" stroke-linejoin="round"/></svg>
<!-- status bar -->
<div class="a" style="left:112px;top:1890px;width:3024px;height:74px;background:#F7F8FA;"></div>
<div class="hl" style="left:112px;top:1890px;width:3024px"></div>
<div class="a" style="left:148.25px;top:1917.7px;width:19.5px;height:20px;border-radius:5px;background:#E7EFFD;box-shadow:inset 0 0 0 2.5px #3574F0"></div>
<div class="t" style="left:179.2px;top:1907.0px;color:#6C707E;letter-spacing:0.11px;">Spring6</div>
<svg class="a" style="left:303.0px;top:1907.0px" width="40" height="40" viewBox="0 0 16 16" fill="none" ><path d="M6.3 4.45l3.4 3.55-3.4 3.55" stroke="#818594" stroke-width="0.95" stroke-linecap="round" stroke-linejoin="round"/></svg>
<div class="a" style="left:354.25px;top:1917.7px;width:19.5px;height:20px;border-radius:5px;background:#E7EFFD;box-shadow:inset 0 0 0 2.5px #3574F0"></div>
<div class="t" style="left:386.0px;top:1907.0px;color:#6C707E;letter-spacing:0.70px;">spring6-ioc-xml</div>
<svg class="a" style="left:627.0px;top:1907.0px" width="40" height="40" viewBox="0 0 16 16" fill="none" ><path d="M6.3 4.45l3.4 3.55-3.4 3.55" stroke="#818594" stroke-width="0.95" stroke-linecap="round" stroke-linejoin="round"/></svg>
<div class="t" style="left:679.4px;top:1907.0px;color:#6C707E;letter-spacing:-0.39px;">src</div>
<svg class="a" style="left:733.3px;top:1907.0px" width="40" height="40" viewBox="0 0 16 16" fill="none" ><path d="M6.3 4.45l3.4 3.55-3.4 3.55" stroke="#818594" stroke-width="0.95" stroke-linecap="round" stroke-linejoin="round"/></svg>
<div class="t" style="left:785.3px;top:1907.0px;color:#6C707E;transform:scaleX(0.953);transform-origin:0 50%;">main</div>
<svg class="a" style="left:863.4px;top:1907.0px" width="40" height="40" viewBox="0 0 16 16" fill="none" ><path d="M6.3 4.45l3.4 3.55-3.4 3.55" stroke="#818594" stroke-width="0.95" stroke-linecap="round" stroke-linejoin="round"/></svg>
<div class="t" style="left:915.3px;top:1907.0px;color:#6C707E;letter-spacing:-0.06px;">resources</div>
<svg class="a" style="left:1069.0px;top:1907.0px" width="40" height="40" viewBox="0 0 16 16" fill="none" ><path d="M6.3 4.45l3.4 3.55-3.4 3.55" stroke="#818594" stroke-width="0.95" stroke-linecap="round" stroke-linejoin="round"/></svg>
<svg class="a" style="left:1120.5px;top:1908.0px" width="40" height="40" viewBox="0 0 16 16" fill="none" ><path d="M5.1 4.85L.75 8.2l4.35 3.35M9.45 2.5L6.4 13.45M10.95 4.9l3.45 2.9" stroke="#E07A38" stroke-width="1.12" stroke-linecap="round" stroke-linejoin="round"/><path d="M15.6 9.25c.9 2.1.8 4.3-.2 5.6-1.1 1.5-3.2 1.3-5.1 1.1-1.5-.2-2.3-1.2-2.2-2.4.1-1.7 1.9-2.2 3.8-2.4 1.7-.2 2.9-.7 3.7-1.9z" fill="#6AA670"/><path d="M10.5 15.6c2-.6 3.5-1.9 4.3-3.8" stroke="#F7F8FA" stroke-width=".5" stroke-linecap="round"/></svg>
<div class="t" style="left:1170.8px;top:1907.0px;color:#6C707E;letter-spacing:0.31px;">spring-datasource.xml</div>
<div class="t" style="left:2421.5px;top:1908.5px;color:#6C707E;transform:scaleX(0.850);transform-origin:0 50%;">21:1</div>
<div class="t" style="left:2517.3px;top:1908.5px;color:#6C707E;transform:scaleX(0.885);transform-origin:0 50%;">LF</div>
<div class="t" style="left:2593.3px;top:1908.5px;color:#6C707E;letter-spacing:0.14px;">UTF-8</div>
<svg class="a" style="left:0;top:0" width="10" height="10" viewBox="0 0 10 10" fill="none"><path d="M2732.5 1930.5c-1.5-2.5.5-7 4.5-10.5 5-4.3 12-6.3 17-4.5M2758 1921c2.5 3.3 1.5 8.5-2.5 12.5-3.5 3.5-8 5.5-12 5.8M2737 1938.5c5.5 3.5 13.5 3.8 21 1.5" stroke="#6C707E" stroke-width="2.5" stroke-linecap="round" stroke-linejoin="round"/><path d="M2738.5 1932.5c.5-4 3.8-7.3 8-8M2752.5 1925c.8 3.5-2 7.5-6 8.8" stroke="#6C707E" stroke-width="2.5" stroke-linecap="round" stroke-linejoin="round"/><path d="M2731.2 1942.6L2760.6 1913.5" stroke="#6C707E" stroke-width="2.5" stroke-linecap="round" stroke-linejoin="round"/></svg>
<div class="t" style="left:2808.0px;top:1908.5px;color:#6C707E;">4</div>
<div class="t" style="left:2834.5px;top:1909px;color:#6C707E;letter-spacing:-.6px;font-size:31.5px;font-weight:400">个空格</div>
<svg class="a" style="left:0;top:0" width="10" height="10" viewBox="0 0 10 10" fill="none"><rect x="2979.3" y="1923.8" width="21.6" height="17.8" rx="3.2" stroke="#6C707E" stroke-width="2.5" stroke-linecap="round" stroke-linejoin="round"/><path d="M2990 1929.8v6.5M2996.5 1923.5V1920.8a6.6 6.6 0 0 1 13.2 0v3" stroke="#6C707E" stroke-width="2.5" stroke-linecap="round" stroke-linejoin="round"/></svg>
<svg class="a" style="left:0;top:0" width="10" height="10" viewBox="0 0 10 10" fill="none"><circle cx="3070.2" cy="1927.8" r="16" stroke="#6C707E" stroke-width="2.5" stroke-linecap="round" stroke-linejoin="round"/><path d="M3070.2 1920v9.5" stroke="#6C707E" stroke-width="4" stroke-linecap="round"/><circle cx="3070.2" cy="1935.8" r="2.6" fill="#6C707E"/></svg>
<!-- right stripe -->
<div class="a" style="left:3036px;top:176px;width:100px;height:1715px;background:#F7F8FA;"></div>
<svg class="a" style="left:0;top:0" width="10" height="10" viewBox="0 0 10 10" fill="none"><path d="M3089 207.3c-1.2-.5-2.5-.8-3.8-.8-7.3 0-12.9 5.6-12.9 13.5v7.7l-5.8 11.4a1.2 1.2 0 0 0 1.1 1.8h34.6a1.2 1.2 0 0 0 1.1-1.8l-5.8-11.4v-4.9" stroke="#6C707E" stroke-width="3.7" stroke-linecap="round" stroke-linejoin="round"/><path d="M3079.9 245.8h10.4a5.2 5.2 0 0 1-10.4 0z" fill="#6C707E"/><circle cx="3101.2" cy="210.7" r="8.8" fill="#D25C64"/></svg>
<svg class="a" style="left:0;top:0" width="10" height="10" viewBox="0 0 10 10" fill="none"><path d="M3067.6 311.2C3068.9 310.9 3072.8 309.6 3075.5 309.2C3078.2 308.8 3080.8 308.5 3083.5 308.7C3086.2 308.9 3089.4 309.5 3092.0 310.6C3094.6 311.7 3097.1 313.3 3098.8 315.2C3100.5 317.1 3101.9 319.7 3102.4 322.0C3102.9 324.3 3102.6 326.9 3101.6 329.0C3100.6 331.1 3098.7 333.4 3096.5 334.8C3094.3 336.2 3091.2 337.3 3088.5 337.5C3085.8 337.7 3082.6 337.0 3080.5 336.0C3078.4 335.0 3076.5 333.1 3075.8 331.5C3075.1 329.9 3075.5 327.8 3076.3 326.6C3077.1 325.4 3079.0 324.4 3080.5 324.2C3082.0 324.0 3084.6 325.4 3085.4 325.6" stroke="#6C707E" stroke-width="3.7" stroke-linecap="round" stroke-linejoin="round"/><path d="M3084.4 328.9C3085.2 329.0 3088.1 329.9 3089.5 329.3C3090.9 328.7 3092.6 326.9 3093.0 325.3C3093.4 323.8 3092.8 321.4 3091.8 320.0C3090.8 318.6 3088.8 317.7 3086.8 317.2C3084.8 316.7 3082.3 316.5 3080.0 316.9C3077.7 317.3 3074.8 318.2 3072.8 319.6C3070.8 321.0 3069.1 323.0 3068.2 325.0C3067.3 327.0 3067.2 329.3 3067.6 331.5C3068.0 333.7 3069.1 336.1 3070.6 338.0C3072.1 339.9 3074.4 341.4 3076.8 342.6C3079.2 343.8 3082.2 344.6 3085.0 345.0C3087.8 345.4 3090.7 345.3 3093.5 344.9C3096.3 344.5 3100.2 343.0 3101.6 342.6" stroke="#6C707E" stroke-width="3.7" stroke-linecap="round" stroke-linejoin="round"/></svg>
<svg class="a" style="left:3060.0px;top:401.5px" width="50" height="50" viewBox="0 0 50 50" fill="none" ><ellipse cx="25" cy="11" rx="18.5" ry="7" stroke="#6C707E" stroke-width="3.7"/><path d="M6.5 11v28c0 3.900 8.3 7 18.5 7s18.5-3.1 18.5-7V11M6.5 20.3c0 3.900 8.3 7 18.5 7s18.5-3.1 18.5-7M6.5 29.7c0 3.900 8.3 7 18.5 7s18.5-3.1 18.5-7" stroke="#6C707E" stroke-width="3.7" stroke-linecap="round" stroke-linejoin="round"/></svg>
<svg class="a" style="left:3062.0px;top:511.8px" width="46.2" height="31.5" viewBox="0 0 33 25" fill="none" preserveAspectRatio="none"><path d="M2 23L6.8 2.3M5.6 8.6C7.6 4.3 11.2 1.7 14.8 2.2c3.1.5 4 3 3.3 6.3L14.8 23M17.7 9C19.7 4.6 23.5 1.7 27.3 2.2c3.3.5 4.3 3.2 3.6 6.5L27.8 23" stroke="#6C707E" stroke-width="2.9" stroke-linecap="round" stroke-linejoin="round"/></svg>
</div></div>
<div id="rim"></div>
</body></html>
